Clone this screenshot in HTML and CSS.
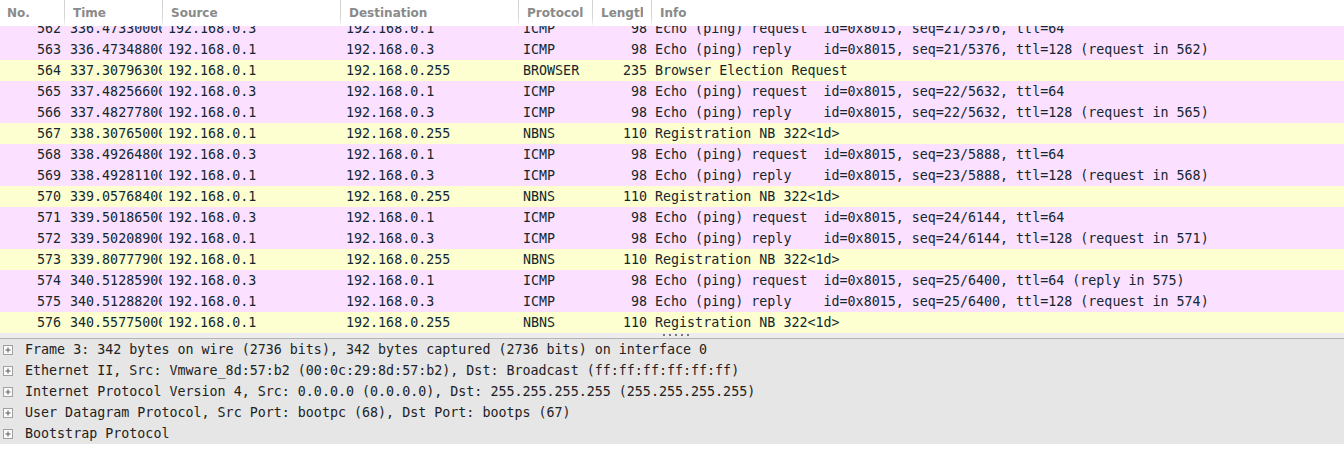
FILE: index.html
```html
<!DOCTYPE html>
<html>
<head>
<meta charset="utf-8">
<link rel="stylesheet" href="styles.css">
</head>
<body>
<div class="packet-list">
  <div class="header">
    <div class="hcell"><div class="hlabel">No.</div></div>
    <div class="hcell sep"><div class="hlabel">Time</div></div>
    <div class="hcell sep"><div class="hlabel">Source</div></div>
    <div class="hcell sep"><div class="hlabel">Destination</div></div>
    <div class="hcell sep"><div class="hlabel">Protocol</div></div>
    <div class="hcell sep"><div class="hlabel">Length</div></div>
    <div class="hcell sep"><div class="hlabel">Info</div></div>
  </div>
  <div class="rows">
    <div class="rows-inner">
      <div class="row icmp"><span class="c no">562</span><span class="c t">336.473300000</span><span class="c s">192.168.0.3</span><span class="c d">192.168.0.1</span><span class="c p">ICMP</span><span class="c l">98</span><span class="c i">Echo (ping) request  id=0x8015, seq=21/5376, ttl=64</span></div>
      <div class="row icmp"><span class="c no">563</span><span class="c t">336.473488000</span><span class="c s">192.168.0.1</span><span class="c d">192.168.0.3</span><span class="c p">ICMP</span><span class="c l">98</span><span class="c i">Echo (ping) reply    id=0x8015, seq=21/5376, ttl=128 (request in 562)</span></div>
      <div class="row nb"><span class="c no">564</span><span class="c t">337.307963000</span><span class="c s">192.168.0.1</span><span class="c d">192.168.0.255</span><span class="c p">BROWSER</span><span class="c l">235</span><span class="c i">Browser Election Request</span></div>
      <div class="row icmp"><span class="c no">565</span><span class="c t">337.482566000</span><span class="c s">192.168.0.3</span><span class="c d">192.168.0.1</span><span class="c p">ICMP</span><span class="c l">98</span><span class="c i">Echo (ping) request  id=0x8015, seq=22/5632, ttl=64</span></div>
      <div class="row icmp"><span class="c no">566</span><span class="c t">337.482778000</span><span class="c s">192.168.0.1</span><span class="c d">192.168.0.3</span><span class="c p">ICMP</span><span class="c l">98</span><span class="c i">Echo (ping) reply    id=0x8015, seq=22/5632, ttl=128 (request in 565)</span></div>
      <div class="row nb"><span class="c no">567</span><span class="c t">338.307650000</span><span class="c s">192.168.0.1</span><span class="c d">192.168.0.255</span><span class="c p">NBNS</span><span class="c l">110</span><span class="c i">Registration NB 322&lt;1d&gt;</span></div>
      <div class="row icmp"><span class="c no">568</span><span class="c t">338.492648000</span><span class="c s">192.168.0.3</span><span class="c d">192.168.0.1</span><span class="c p">ICMP</span><span class="c l">98</span><span class="c i">Echo (ping) request  id=0x8015, seq=23/5888, ttl=64</span></div>
      <div class="row icmp"><span class="c no">569</span><span class="c t">338.492811000</span><span class="c s">192.168.0.1</span><span class="c d">192.168.0.3</span><span class="c p">ICMP</span><span class="c l">98</span><span class="c i">Echo (ping) reply    id=0x8015, seq=23/5888, ttl=128 (request in 568)</span></div>
      <div class="row nb"><span class="c no">570</span><span class="c t">339.057684000</span><span class="c s">192.168.0.1</span><span class="c d">192.168.0.255</span><span class="c p">NBNS</span><span class="c l">110</span><span class="c i">Registration NB 322&lt;1d&gt;</span></div>
      <div class="row icmp"><span class="c no">571</span><span class="c t">339.501865000</span><span class="c s">192.168.0.3</span><span class="c d">192.168.0.1</span><span class="c p">ICMP</span><span class="c l">98</span><span class="c i">Echo (ping) request  id=0x8015, seq=24/6144, ttl=64</span></div>
      <div class="row icmp"><span class="c no">572</span><span class="c t">339.502089000</span><span class="c s">192.168.0.1</span><span class="c d">192.168.0.3</span><span class="c p">ICMP</span><span class="c l">98</span><span class="c i">Echo (ping) reply    id=0x8015, seq=24/6144, ttl=128 (request in 571)</span></div>
      <div class="row nb"><span class="c no">573</span><span class="c t">339.807779000</span><span class="c s">192.168.0.1</span><span class="c d">192.168.0.255</span><span class="c p">NBNS</span><span class="c l">110</span><span class="c i">Registration NB 322&lt;1d&gt;</span></div>
      <div class="row icmp"><span class="c no">574</span><span class="c t">340.512859000</span><span class="c s">192.168.0.3</span><span class="c d">192.168.0.1</span><span class="c p">ICMP</span><span class="c l">98</span><span class="c i">Echo (ping) request  id=0x8015, seq=25/6400, ttl=64 (reply in 575)</span></div>
      <div class="row icmp"><span class="c no">575</span><span class="c t">340.512882000</span><span class="c s">192.168.0.1</span><span class="c d">192.168.0.3</span><span class="c p">ICMP</span><span class="c l">98</span><span class="c i">Echo (ping) reply    id=0x8015, seq=25/6400, ttl=128 (request in 574)</span></div>
      <div class="row nb"><span class="c no">576</span><span class="c t">340.557750000</span><span class="c s">192.168.0.1</span><span class="c d">192.168.0.255</span><span class="c p">NBNS</span><span class="c l">110</span><span class="c i">Registration NB 322&lt;1d&gt;</span></div>
    </div>
  </div>
</div>
<div class="splitter"><div class="grip"></div></div>
<div class="details">
  <div class="drow"><svg class="exp" width="10" height="10" viewBox="0 0 10 10"><rect x="0.5" y="0.5" width="9" height="9" fill="#fafafa" stroke="#a2a2a2"/><path d="M2.5 5H7.5M5 2.5V7.5" stroke="#5a5a5a" stroke-width="1"/></svg><span>Frame 3: 342 bytes on wire (2736 bits), 342 bytes captured (2736 bits) on interface 0</span></div>
  <div class="drow"><svg class="exp" width="10" height="10" viewBox="0 0 10 10"><rect x="0.5" y="0.5" width="9" height="9" fill="#fafafa" stroke="#a2a2a2"/><path d="M2.5 5H7.5M5 2.5V7.5" stroke="#5a5a5a" stroke-width="1"/></svg><span>Ethernet II, Src: Vmware_8d:57:b2 (00:0c:29:8d:57:b2), Dst: Broadcast (ff:ff:ff:ff:ff:ff)</span></div>
  <div class="drow"><svg class="exp" width="10" height="10" viewBox="0 0 10 10"><rect x="0.5" y="0.5" width="9" height="9" fill="#fafafa" stroke="#a2a2a2"/><path d="M2.5 5H7.5M5 2.5V7.5" stroke="#5a5a5a" stroke-width="1"/></svg><span>Internet Protocol Version 4, Src: 0.0.0.0 (0.0.0.0), Dst: 255.255.255.255 (255.255.255.255)</span></div>
  <div class="drow"><svg class="exp" width="10" height="10" viewBox="0 0 10 10"><rect x="0.5" y="0.5" width="9" height="9" fill="#fafafa" stroke="#a2a2a2"/><path d="M2.5 5H7.5M5 2.5V7.5" stroke="#5a5a5a" stroke-width="1"/></svg><span>User Datagram Protocol, Src Port: bootpc (68), Dst Port: bootps (67)</span></div>
  <div class="drow"><svg class="exp" width="10" height="10" viewBox="0 0 10 10"><rect x="0.5" y="0.5" width="9" height="9" fill="#fafafa" stroke="#a2a2a2"/><path d="M2.5 5H7.5M5 2.5V7.5" stroke="#5a5a5a" stroke-width="1"/></svg><span>Bootstrap Protocol</span></div>
</div>
</body>
</html>
```
FILE: styles.css
```css
html, body {
  margin: 0;
  padding: 0;
  background: #ffffff;
}
body {
  width: 1344px;
  height: 456px;
  overflow: hidden;
}
.packet-list {
  height: 333px;
  display: flex;
  flex-direction: column;
}
.header {
  height: 26px;
  flex: none;
  display: grid;
  grid-template-columns: 64px 98px 178px 178px 74px 59px 1fr;
  background: #ffffff;
}
.hcell {
  font-family: "DejaVu Sans", sans-serif;
  font-weight: bold;
  font-size: 12px;
  color: #8a8a8a;
  line-height: 26px;
  padding: 0 8px 0 7px;
  white-space: nowrap;
  overflow: hidden;
}
.hlabel {
  overflow: hidden;
  white-space: nowrap;
}
.hcell.sep {
  padding-left: 8px;
  border-left: 1px solid #d4d4d4;
  border-image: linear-gradient(to bottom, #d0d0d0 0%, #dadada 70%, rgba(220,220,220,0) 100%) 1;
}
.rows {
  flex: 1;
  overflow: hidden;
}
.rows-inner {
  margin-top: -8px;
}
.row {
  display: grid;
  grid-template-columns: 64px 98px 178px 178px 74px 59px 1fr;
  height: 21px;
  font-family: "DejaVu Sans Mono", monospace;
  font-size: 13.33px;
  line-height: 21px;
  color: #12272e;
}
.row.icmp { background: #fce0ff; }
.row.nb { background: #feffd0; }
.c {
  white-space: pre;
  overflow: hidden;
}
.c.no { text-align: right; padding-right: 3px; }
.c.t { padding-left: 6px; }
.c.s { padding-left: 6px; }
.c.d { padding-left: 6px; }
.c.p { padding-left: 5px; }
.c.l { text-align: right; padding-right: 4px; }
.c.i { padding-left: 4px; }
.splitter {
  height: 5px;
  background: #ededed;
  border-bottom: 1px solid #b4b4b4;
  display: flex;
  justify-content: center;
}
.grip {
  width: 28px;
  height: 2px;
  margin-top: 1px;
  margin-left: 10px;
  background-image: linear-gradient(90deg, #7a7a7a 0 2px, transparent 2px);
  background-size: 6px 2px;
  background-repeat: repeat-x;
}
.details {
  background: #e6e6e6;
}
.drow {
  height: 21px;
  display: flex;
  align-items: center;
  font-family: "DejaVu Sans Mono", monospace;
  font-size: 13.33px;
  color: #222222;
  white-space: pre;
}
.exp {
  flex: none;
  margin-left: 3px;
  margin-right: 12px;
}
```
